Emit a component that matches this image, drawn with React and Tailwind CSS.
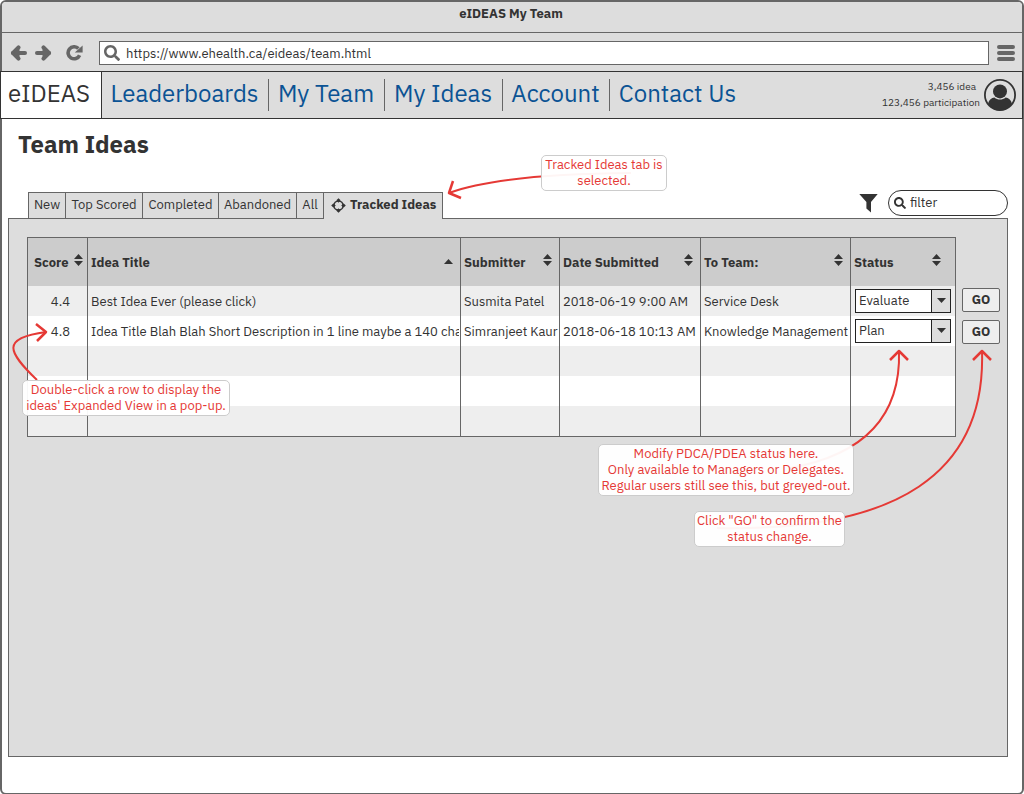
import React from "react";
import { FaSearch } from "react-icons/fa";

function BackIcon() {
  return (
    <svg className="h-4 w-[17px]" viewBox="0 0 17 16" fill="none" stroke="#666" strokeWidth="4">
      <path d="M3 8H15" strokeLinecap="round" />
      <path d="M8.5 2.4L3 8L8.5 13.6" strokeLinecap="round" strokeLinejoin="round" />
      <path d="M3 8L9.5 2.5V13.5Z" fill="#666" stroke="none" />
    </svg>
  );
}

function ForwardIcon() {
  return (
    <svg className="h-4 w-[17px]" viewBox="0 0 17 16" fill="none" stroke="#666" strokeWidth="4">
      <path d="M2 8H14" strokeLinecap="round" />
      <path d="M8.5 2.4L14 8L8.5 13.6" strokeLinecap="round" strokeLinejoin="round" />
      <path d="M14 8L7.5 2.5V13.5Z" fill="#666" stroke="none" />
    </svg>
  );
}

function ReloadIcon() {
  return (
    <svg className="h-4 w-[17px]" viewBox="0 0 17 16" fill="none">
      <path d="M12.4 3.6A6 6 0 1 0 13.6 10.2" stroke="#666" strokeWidth="3.6" />
      <path d="M16.6 0.4V7.6H8.8Z" fill="#666" />
    </svg>
  );
}

function MenuIcon() {
  return (
    <svg className="h-4 w-[18px]" viewBox="0 0 18 16" stroke="#666" strokeWidth="4" strokeLinecap="round">
      <path d="M2 2H16M2 8H16M2 14H16" />
    </svg>
  );
}

function FunnelIcon() {
  return (
    <svg className="h-5 w-[19px]" viewBox="0 0 19 20" fill="#333">
      <path d="M0.3 1H18.7L12 9V19.4L7.4 15.600V9Z" />
    </svg>
  );
}

function TargetIcon() {
  return (
    <svg className="size-[15px] shrink-0" viewBox="0 0 15 15">
      <circle cx="7.5" cy="7.5" r="4.6" fill="none" stroke="#333" strokeWidth="1.5" />
      <path
        d="M7.5 0.2L9.6 2.3L7.5 4.8L5.4 2.3ZM7.5 14.8L9.6 12.7L7.5 10.2L5.4 12.7ZM0.2 7.5L2.3 5.4L4.8 7.5L2.3 9.6ZM14.8 7.5L12.7 5.4L10.2 7.5L12.7 9.6Z"
        fill="#333"
      />
    </svg>
  );
}

function AvatarIcon() {
  return (
    <svg className="size-8 shrink-0" viewBox="0 0 32 32">
      <circle cx="16" cy="16" r="15.1" fill="#ddd" stroke="#333" strokeWidth="1.8" />
      <circle cx="16" cy="12.4" r="7" fill="#333" />
      <path d="M4 24.5C5 20.800 7.6 18.6 10.4 18.4C13.6 21.2 18.4 21.2 21.6 18.4C24.4 18.6 27 20.8 28 24.5C25.4 28.9 21 31.4 16 31.4C11 31.4 6.6 28.9 4 24.5Z" fill="#333" />
    </svg>
  );
}

function SortIcon({ direction }) {
  return (
    <svg className="mb-[5px] h-3 w-[9px] shrink-0" viewBox="0 0 9 12" fill="#333">
      {direction === "up" ? (
        <path d="M4.5 5L9 10H0Z" />
      ) : (
        <path d="M4.5 0L9 5H0ZM4.5 12L9 7H0Z" />
      )}
    </svg>
  );
}

const links = [
  { label: "Leaderboards", width: "w-[167px]" },
  { label: "My Team", width: "w-[116px]" },
  { label: "My Ideas", width: "w-[118px]" },
  { label: "Account", width: "w-[107px]" },
  { label: "Contact Us", width: "w-[136px]" },
];

const tabs = [
  { label: "New", width: "w-[37px]" },
  { label: "Top Scored", width: "w-[77px]" },
  { label: "Completed", width: "w-[76px]" },
  { label: "Abandoned", width: "w-[78px]" },
  { label: "All", width: "w-[27px]" },
];

const columns = [
  { label: "Score", width: "w-[60px]", pad: "pl-1.5 pr-1" },
  { label: "Idea Title", width: "", pad: "pl-[3px] pr-[7px]", sort: "up" },
  { label: "Submitter", width: "w-[99px]", pad: "pl-[3px] pr-[7px]" },
  { label: "Date Submitted", width: "w-[141px]", pad: "pl-[3px] pr-[7px]" },
  { label: "To Team:", width: "w-[150px]", pad: "pl-[3px] pr-[7px]" },
  { label: "Status", width: "w-[105px]", pad: "pl-[3px] pr-3.5" },
];

const ideas = [
  {
    score: "4.4",
    title: "Best Idea Ever (please click)",
    submitter: "Susmita Patel",
    date: "2018-06-19 9:00 AM",
    team: "Service Desk",
    status: "Evaluate",
  },
  {
    score: "4.8",
    title: "Idea Title Blah Blah Short Description in 1 line maybe a 140 cha",
    submitter: "Simranjeet Kaur",
    date: "2018-06-18 10:13 AM",
    team: "Knowledge Management",
    status: "Plan",
  },
];

const statuses = ["Plan", "Do", "Check", "Act", "Evaluate"];

function StatusSelect({ value, label }) {
  return (
    <div className="grid h-6 w-24">
      <select
        aria-label={label}
        defaultValue={value}
        className="col-start-1 row-start-1 appearance-none border border-[#222] bg-white pl-[3px] pr-6 text-[13px] leading-4"
      >
        {statuses.map((s) => (
          <option key={s}>{s}</option>
        ))}
      </select>
      <span className="pointer-events-none col-start-1 row-start-1 flex w-5 items-center justify-center justify-self-end border border-[#222] bg-[#ddd]">
        <svg className="h-[5px] w-[9px]" viewBox="0 0 9 5" fill="#333">
          <path d="M0 0H9L4.5 5Z" />
        </svg>
      </span>
    </div>
  );
}

function IdeaTable() {
  const cell = "border-x border-[#666] p-0 pl-[3px] pt-0.5";
  return (
    <table className="w-full table-fixed border-collapse border border-[#666] text-[13px] leading-4">
      <thead className="bg-[#ccc]">
        <tr className="h-12">
          {columns.map((c) => (
            <th key={c.label} className={`border-x border-[#666] p-0 pt-0.5 text-left font-bold ${c.width}`}>
              <button type="button" className={`flex w-full items-center justify-between whitespace-nowrap ${c.pad}`}>
                {c.label}
                <SortIcon direction={c.sort} />
              </button>
            </th>
          ))}
        </tr>
      </thead>
      <tbody>
        {ideas.map((r) => (
          <tr key={r.score} className="h-[30px] odd:bg-[#eee] even:bg-white">
            <td className="border-x border-[#666] p-0 pr-[17px] pt-0.5 text-right">{r.score}</td>
            {[r.title, r.submitter, r.date, r.team].map((text) => (
              <td key={text} className={cell}>
                <div className="mr-px overflow-hidden whitespace-nowrap">{text}</div>
              </td>
            ))}
            <td className="border-x border-[#666] p-0 pl-1">
              <StatusSelect value={r.status} label={`Status of ${r.title}`} />
            </td>
          </tr>
        ))}
        {[0, 1, 2].map((i) => (
          <tr key={i} className="h-[30px] last:h-[31px] odd:bg-[#eee] even:bg-white">
            {columns.map((c) => (
              <td key={c.label} className="border-x border-[#666] p-0" />
            ))}
          </tr>
        ))}
      </tbody>
    </table>
  );
}

function Note({ className, children }) {
  return (
    <p className={`absolute whitespace-nowrap rounded-[5px] border border-[#ccc] bg-white/95 py-px text-center text-[13px] leading-4 text-[#e53935] ${className}`}>
      {children}
    </p>
  );
}

function Arrow({ className, viewBox, line, head }) {
  return (
    <svg className={`pointer-events-none absolute ${className}`} viewBox={viewBox} fill="none" stroke="#e53935" strokeWidth="2">
      <path d={line} />
      <path d={head} strokeWidth="2.5" strokeLinejoin="round" />
    </svg>
  );
}

export default function App() {
  return (
    <div className="relative flex min-h-screen flex-col rounded-md border-2 border-[#666] bg-white font-['IBM_Plex_Sans','Noto_Sans',sans-serif] text-[#333]">
      <header className="flex h-[31px] items-start justify-center rounded-t border-b border-[#666] bg-[#ddd] pr-0.5 pt-1 text-[13px] font-bold leading-4">
        eIDEAS My Team
      </header>

      <div className="flex h-[38px] items-center bg-[#ddd] pl-2 pr-[7px] pt-0.5">
        <div className="flex items-center">
          <button type="button" aria-label="Back"><BackIcon /></button>
          <button type="button" aria-label="Forward" className="ml-2"><ForwardIcon /></button>
          <button type="button" aria-label="Reload" className="ml-3.5"><ReloadIcon /></button>
        </div>
        <label className="ml-4 mr-2 flex h-6 flex-1 items-center gap-1.5 border border-[#666] bg-white pl-1">
          <FaSearch className="size-4 text-[#666]" />
          <input
            aria-label="Address"
            defaultValue="https://www.ehealth.ca/eideas/team.html"
            className="min-w-0 flex-1 pt-0.5 text-[13px] leading-4 outline-none"
          />
        </label>
        <button type="button" aria-label="Menu"><MenuIcon /></button>
      </div>

      <nav className="-ml-0.5 -mr-px flex h-12 items-stretch border border-[#333] bg-[#ddd]">
        <a href="#home" className="flex w-[101px] justify-center border-r border-[#333] bg-white pr-1 pt-[5px] text-2xl">
          eIDEAS
        </a>
        {links.map((l) => (
          <a
            key={l.label}
            href="#page"
            className={`my-[7px] flex shrink-0 items-center justify-center whitespace-nowrap border-r border-[#666] pb-1 pr-px text-2xl text-[#0b5394] last-of-type:border-r-0 ${l.width}`}
          >
            {l.label}
          </a>
        ))}
        <div className="ml-auto flex items-center gap-1 pr-1.5 text-[10px] leading-4">
          <div className="text-right">
            <p className="pr-1">3,456 idea</p>
            <p>123,456 participation</p>
          </div>
          <AvatarIcon />
        </div>
      </nav>

      <main className="flex flex-1 flex-col pb-9 pl-1.5 pr-3.5">
        <h1 className="ml-2.5 mt-[9px] text-2xl font-bold leading-8">Team Ideas</h1>

        <div className="-mb-px mt-auto flex items-end justify-between pt-[30px]">
          <div role="tablist" className="ml-5 flex h-[27px] text-[13px] leading-4">
            {tabs.map((t) => (
              <button
                key={t.label}
                type="button"
                role="tab"
                aria-selected="false"
                className={`flex items-center justify-center whitespace-nowrap border border-r-0 border-[#666] bg-[#ddd] pb-0.5 ${t.width}`}
              >
                {t.label}
              </button>
            ))}
            <button
              type="button"
              role="tab"
              aria-selected="true"
              className="z-10 flex w-[120px] items-center gap-1 whitespace-nowrap border border-b-0 border-[#666] bg-[#ddd] pb-0.5 pl-[7px] font-bold"
            >
              <TargetIcon />
              Tracked Ideas
            </button>
          </div>
          <div className="mb-[3px] flex items-center gap-2.5">
            <FunnelIcon />
            <label className="flex h-[26px] w-[120px] items-center gap-1 rounded-full border border-[#333] bg-white pl-[5px]">
              <FaSearch className="size-3 text-[#333]" />
              <input
                aria-label="Filter ideas"
                placeholder="filter"
                className="w-20 text-[13px] leading-4 outline-none placeholder:text-[#333]"
              />
            </label>
          </div>
        </div>

        <section className="flex min-h-[539px] flex-1 items-start gap-1.5 border border-[#666] bg-[#ddd] pl-[18px] pr-[7px] pt-[18px]">
          <div className="min-w-0 flex-1">
            <IdeaTable />
          </div>
          <div className="flex flex-col gap-2 pt-[51px]">
            {ideas.map((r) => (
              <button
                key={r.score}
                type="button"
                className="h-6 w-[38px] rounded-[2px] border border-[#666] bg-[#eee] text-[13px] font-bold leading-4"
              >
                GO
              </button>
            ))}
          </div>
        </section>
      </main>

      <Arrow
        className="left-[438px] top-[158px] h-[50px] w-[200px]"
        viewBox="440 160 200 50"
        line="M631 173Q500 174 449 193"
        head="M453 181L449 193L461 198"
      />
      <Note className="left-[539px] top-[153px] w-[126px]">
        Tracked Ideas tab is<br />selected.
      </Note>

      <Arrow
        className="left-0 top-[318px] h-[70px] w-[60px]"
        viewBox="2 320 60 70"
        line="M37 380C8 352 0 338 46 332"
        head="M36 324L46 332L37 341"
      />
      <Note className="left-5 top-[378px] w-[208px]">
        Double-click a row to display the<br />ideas' Expanded View in a pop-up.
      </Note>

      <Arrow
        className="right-[102px] top-[338px] h-[140px] w-[140px]"
        viewBox="780 340 140 140"
        line="M790 468Q902 448 899 351"
        head="M890 360L899 351L908 360"
      />
      <Note className="right-[168px] top-[442px] w-[256px]">
        Modify PDCA/PDEA status here.<br />Only available to Managers or Delegates.<br />Regular users still see this, but greyed-out.
      </Note>

      <Arrow
        className="right-[22px] top-[338px] h-[200px] w-[300px]"
        viewBox="700 340 300 200"
        line="M717 528Q988 534 982 351"
        head="M973 360L982 351L991 360"
      />
      <Note className="right-[177px] top-[509px] w-[151px]">
        Click "GO" to confirm the<br />status change.
      </Note>
    </div>
  );
}
